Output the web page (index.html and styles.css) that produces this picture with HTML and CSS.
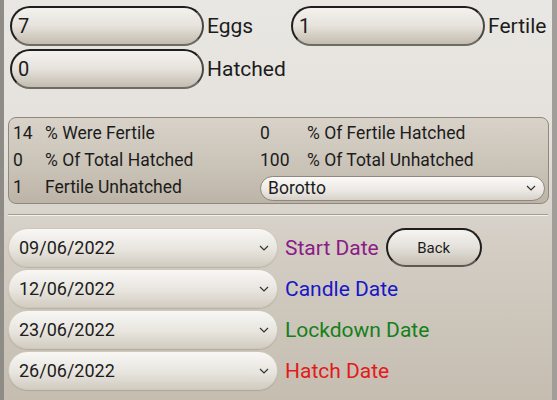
FILE: index.html
```html
<!DOCTYPE html>
<html lang="en">
<head>
    <meta charset="UTF-8">
    <meta name="viewport" content="width=device-width, initial-scale=1.0">
    <title>Hatch Tracker</title>
    <link rel="stylesheet" href="styles.css">
</head>
<body>
    <div class="screen">
        <div class="counts">
            <div class="count-row">
                <div class="count">
                    <div class="count-input">7</div>
                    <span class="count-label">Eggs</span>
                </div>
                <div class="count">
                    <div class="count-input">1</div>
                    <span class="count-label">Fertile</span>
                </div>
            </div>
            <div class="count-row">
                <div class="count">
                    <div class="count-input">0</div>
                    <span class="count-label">Hatched</span>
                </div>
            </div>
        </div>

        <div class="stats">
            <span>14</span>
            <span>% Were Fertile</span>
            <span>0</span>
            <span>% Of Fertile Hatched</span>

            <span>0</span>
            <span>% Of Total Hatched</span>
            <span>100</span>
            <span>% Of Total Unhatched</span>

            <span>1</span>
            <span>Fertile Unhatched</span>
            <div class="breed-select">
                <span>Borotto</span>
                <svg class="chevron" width="10" height="6" viewBox="0 0 10 6"><path d="M1 1 L5 5 L9 1" fill="none" stroke="#333" stroke-width="1.2"/></svg>
            </div>
        </div>

        <div class="divider"></div>

        <div class="dates">
            <div class="date-row">
                <div class="date-select">
                    <span>09/06/2022</span>
                    <svg class="chevron" width="10" height="6" viewBox="0 0 10 6"><path d="M1 1 L5 5 L9 1" fill="none" stroke="#333" stroke-width="1.2"/></svg>
                </div>
                <span class="date-label start">Start Date</span>
                <button class="back-button">Back</button>
            </div>
            <div class="date-row">
                <div class="date-select">
                    <span>12/06/2022</span>
                    <svg class="chevron" width="10" height="6" viewBox="0 0 10 6"><path d="M1 1 L5 5 L9 1" fill="none" stroke="#333" stroke-width="1.2"/></svg>
                </div>
                <span class="date-label candle">Candle Date</span>
            </div>
            <div class="date-row">
                <div class="date-select">
                    <span>23/06/2022</span>
                    <svg class="chevron" width="10" height="6" viewBox="0 0 10 6"><path d="M1 1 L5 5 L9 1" fill="none" stroke="#333" stroke-width="1.2"/></svg>
                </div>
                <span class="date-label lockdown">Lockdown Date</span>
            </div>
            <div class="date-row">
                <div class="date-select">
                    <span>26/06/2022</span>
                    <svg class="chevron" width="10" height="6" viewBox="0 0 10 6"><path d="M1 1 L5 5 L9 1" fill="none" stroke="#333" stroke-width="1.2"/></svg>
                </div>
                <span class="date-label hatch">Hatch Date</span>
            </div>
        </div>
    </div>
</body>
</html>
```

FILE: styles.css
```css
body {
    margin: 0;
    font-family: Roboto, "Noto Sans", sans-serif;
    color: #1c1c1c;
    background-color: #d6d1c8;
}

.screen {
    box-sizing: border-box;
    width: 557px;
    height: 400px;
    overflow: hidden;
    border-left: 4px solid #8f8c88;
    border-right: 5px solid #a19d98;
    padding: 6px 3px 0 4px;
    background: linear-gradient(#e9e7e3, #e4e1dc 35%, #d4cec5 60%, #c5bdb0);
}

.counts {
    display: flex;
    flex-direction: column;
    gap: 3px;
    padding-left: 2px;
}

.count-row {
    display: flex;
}

.count {
    display: flex;
    align-items: center;
    flex-shrink: 0;
    width: 281px;
}

.count-input {
    box-sizing: border-box;
    width: 194px;
    height: 40px;
    margin-right: 3px;
    padding-left: 6px;
    display: flex;
    align-items: center;
    font-size: 20px;
    border: 2px solid #1e1e1e;
    border-bottom-color: #6e6a64;
    border-right-color: #4a4742;
    border-radius: 20px;
    background: linear-gradient(#f4f2ee, #e6e2dc 50%, #c3bcaf);
}

.count-label {
    font-size: 21px;
}

.stats {
    box-sizing: border-box;
    width: 541px;
    margin-top: 28px;
    padding: 1px 0 3px 4px;
    display: grid;
    grid-template-columns: 32px 215px 47px 1fr;
    grid-auto-rows: 27px;
    align-items: center;
    font-size: 17.5px;
    border: 1.5px solid #90887c;
    border-radius: 8px;
    background: linear-gradient(#d8d2c9, #c9c2b6 60%, #bcb4a7);
}

.breed-select {
    grid-column: 3 / 5;
    box-sizing: border-box;
    width: 285px;
    height: 25px;
    margin-top: 3px;
    padding: 0 8px 0 7px;
    display: flex;
    align-items: center;
    justify-content: space-between;
    border: 1px solid #8e887e;
    border-radius: 13px;
    background: linear-gradient(#fbfaf8, #ebe8e3 60%, #d6d1c9);
}

.divider {
    width: 540px;
    height: 1px;
    margin-top: 10px;
    background-color: #a39d93;
    border-bottom: 1px solid #f3f1ed;
}

.dates {
    display: flex;
    flex-direction: column;
    gap: 2px;
    margin-top: 12px;
}

.date-row {
    display: flex;
    align-items: center;
}

.date-select {
    box-sizing: border-box;
    width: 270px;
    height: 39px;
    padding: 0 8px 0 10px;
    display: flex;
    align-items: center;
    justify-content: space-between;
    font-size: 18px;
    border: 1px solid #cdc7bc;
    border-radius: 20px;
    background: linear-gradient(#f8f7f4, #e8e5df 55%, #d2ccc1);
    box-shadow: 0 1px 1px rgba(0, 0, 0, 0.12);
}

.date-label {
    margin-left: 7px;
    font-size: 21px;
}

.start {
    color: #8b1b87;
}

.candle {
    color: #1717c6;
}

.lockdown {
    color: #15801a;
}

.hatch {
    color: #e4191b;
}

.back-button {
    box-sizing: border-box;
    width: 96px;
    height: 39px;
    margin-left: 7px;
    font-family: Roboto, sans-serif;
    font-size: 15px;
    color: #1c1c1c;
    border: 2px solid #1e1e1e;
    border-bottom-color: #5c5954;
    border-radius: 20px;
    background: linear-gradient(#f6f4f1, #e4e0da 50%, #c6bfb3);
}
```
